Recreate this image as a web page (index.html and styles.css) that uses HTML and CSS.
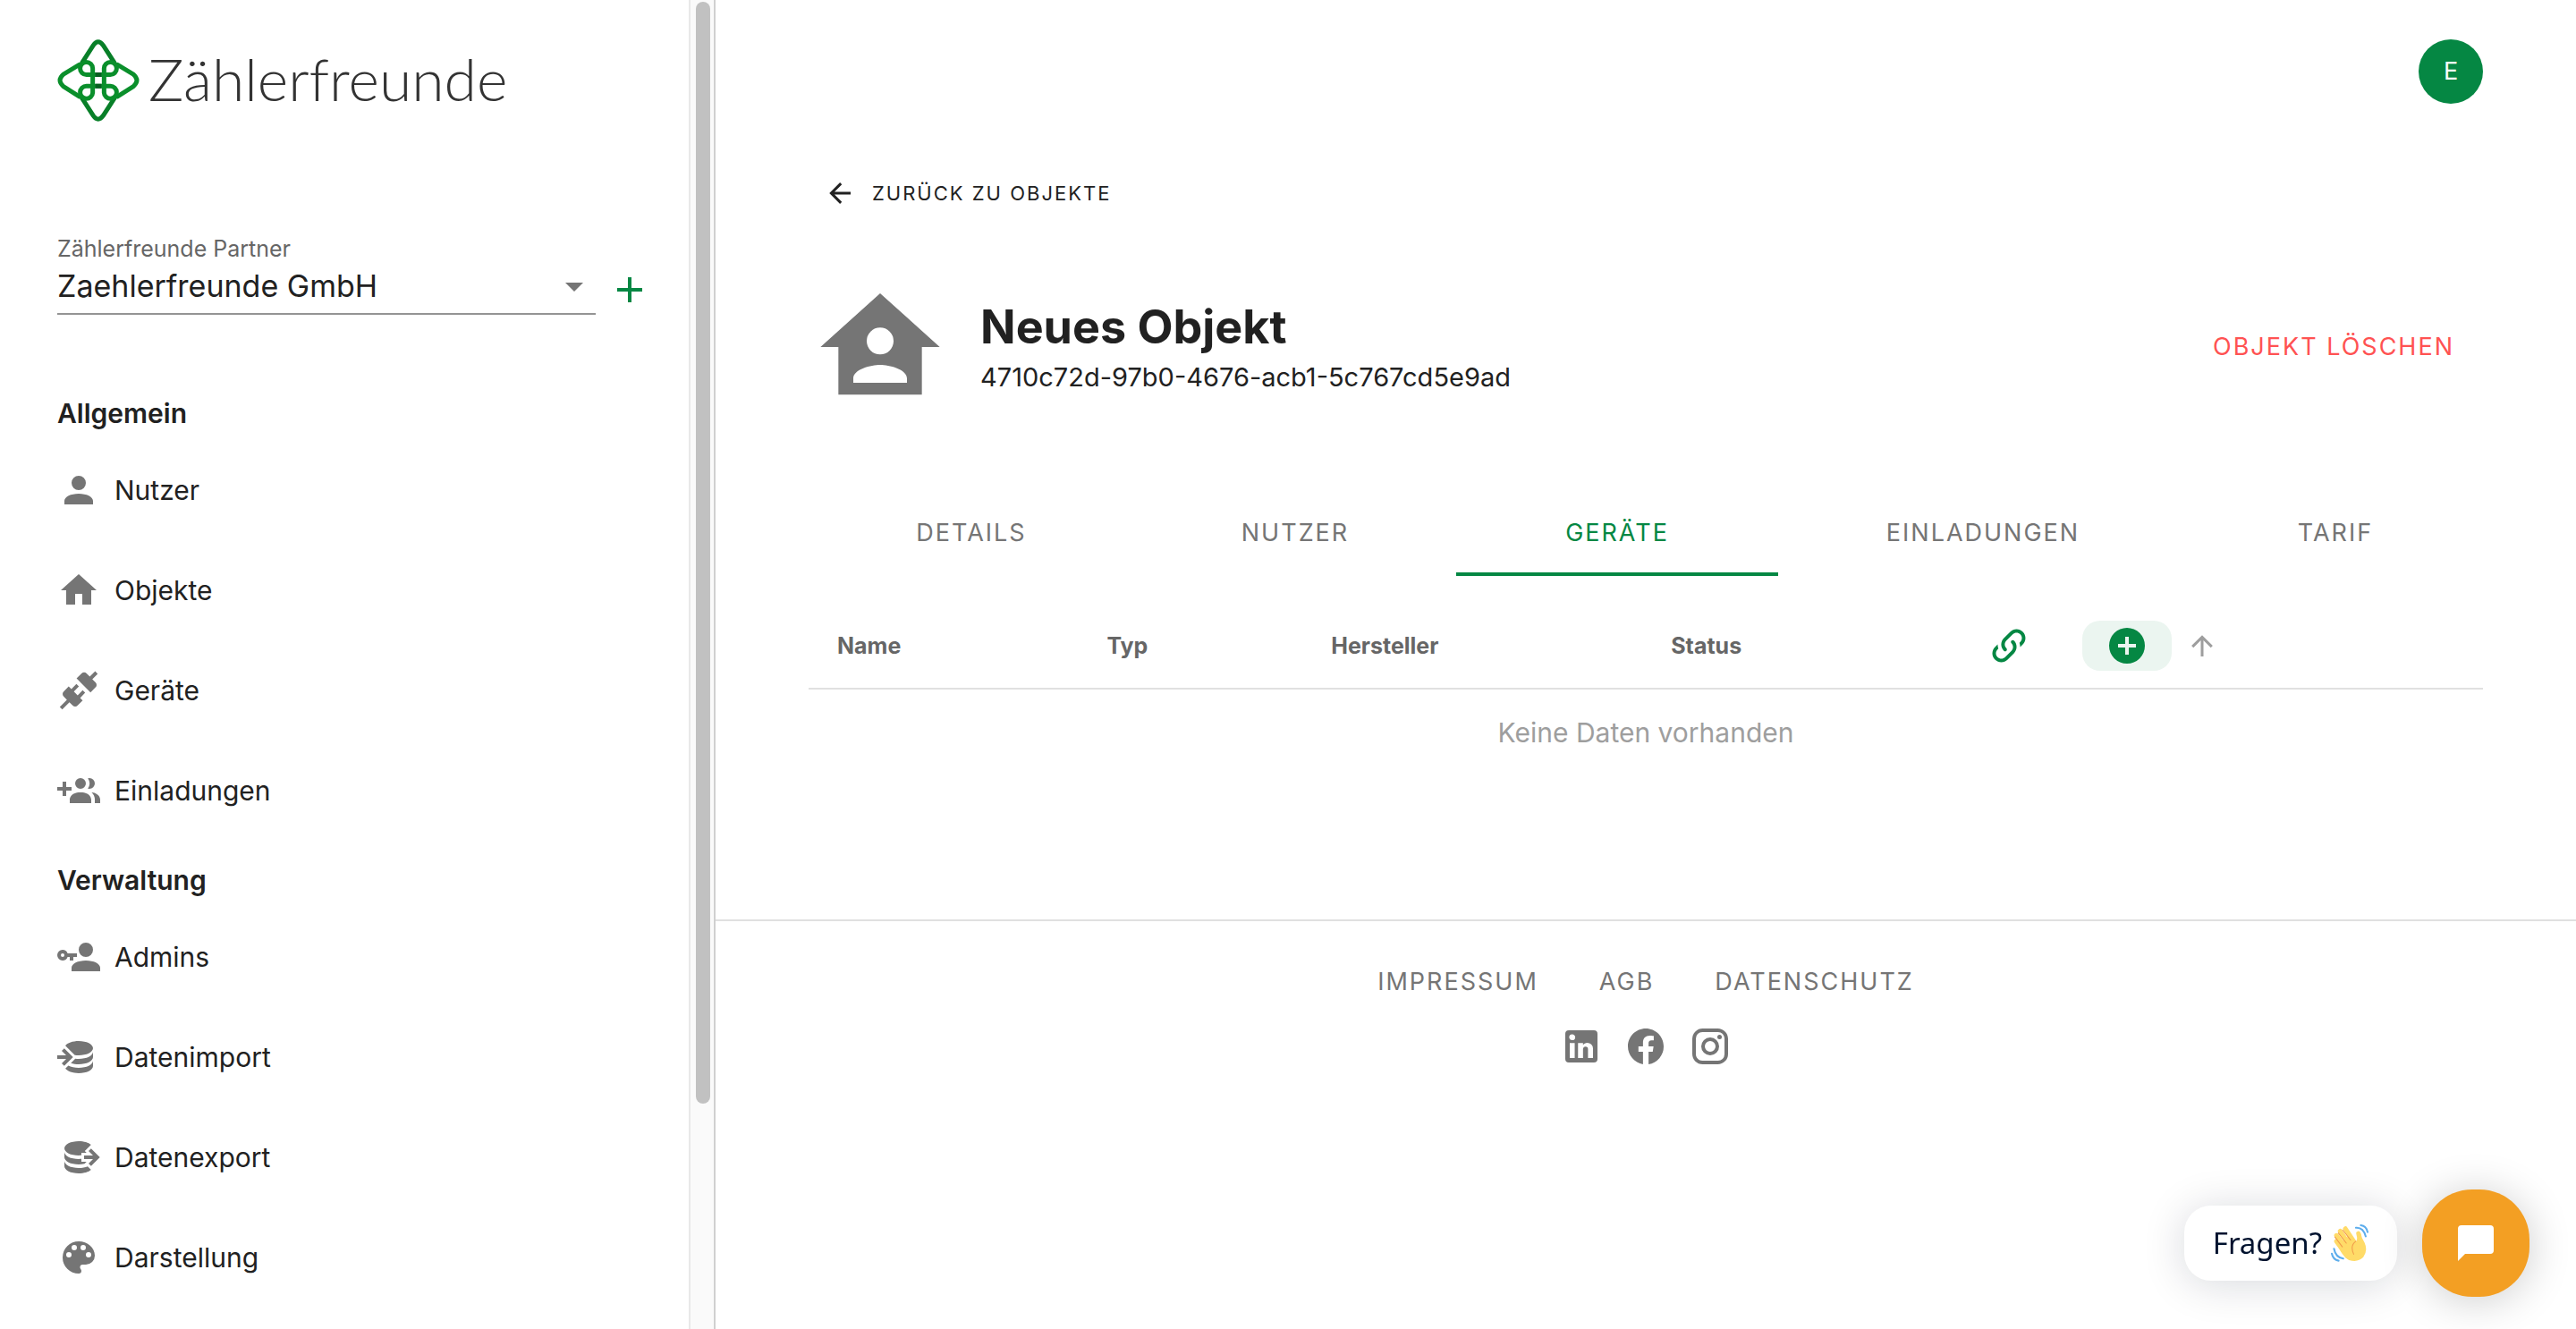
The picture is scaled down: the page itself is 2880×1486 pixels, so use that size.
FILE: index.html
```html
<!DOCTYPE html>
<html lang="de">
<head>
<meta charset="utf-8">
<meta name="viewport" content="width=device-width, initial-scale=1">
<title>Zählerfreunde – Neues Objekt</title>
<link rel="stylesheet" href="styles.css">
</head>
<body>
<div class="app">
  <aside class="drawer">
    <div class="drawer-content">
      <a class="logo" href="#">
        <svg class="logo-mark" viewBox="12 11 272 275" aria-hidden="true">
          <g fill="none" stroke="#0a8f2b" stroke-width="15" stroke-linecap="round" stroke-linejoin="round">
            <path stroke="#087f28" d="M94 88L131 31Q147 8 164 31L201 88M94 209L131 266Q147 289 164 266L201 209"/>
            <path d="M84 96L31 128Q8 148 31 168L84 202M212 96L265 128Q288 148 265 168L212 202"/>
            <path d="M129 108V189A21 21 0 1 1 108 167H188A21 21 0 1 1 167 189V108A21 21 0 1 1 188 129H108A21 21 0 1 1 129 108Z"/>
            <path stroke="#075f20" stroke-linecap="butt" d="M138 129H158M138 167H158"/>
          </g>
        </svg>
        <span class="logo-text">Zählerfreunde</span>
      </a>
      <div class="partner">
        <div class="partner-field">
          <label for="partner">Zählerfreunde Partner</label>
          <div class="select-box">
            <select id="partner"><option>Zaehlerfreunde GmbH</option></select>
            <svg class="icon caret" viewBox="0 0 24 24" aria-hidden="true"><path d="M7,10L12,15L17,10H7Z"/></svg>
          </div>
        </div>
        <button class="icon-button" type="button" aria-label="Partner hinzufügen">
          <svg class="icon" viewBox="0 0 24 24"><path d="M19,13H13V19H11V13H5V11H11V5H13V11H19V13Z"/></svg>
        </button>
      </div>
      <nav class="menu">
        <h2>Allgemein</h2>
        <a href="#"><svg class="icon" viewBox="0 0 24 24"><path d="M12,4A4,4 0 0,1 16,8A4,4 0 0,1 12,12A4,4 0 0,1 8,8A4,4 0 0,1 12,4M12,14C16.42,14 20,15.79 20,18V20H4V18C4,15.79 7.58,14 12,14Z"/></svg>Nutzer</a>
        <a href="#"><svg class="icon" viewBox="0 0 24 24"><path d="M10,20V14H14V20H19V12H22L12,3L2,12H5V20H10Z"/></svg>Objekte</a>
        <a href="#"><svg class="icon" viewBox="0 0 24 24"><path d="M21.4 7.5C22.2 8.3 22.2 9.6 21.4 10.3L18.6 13.1L10.8 5.3L13.6 2.5C14.4 1.7 15.7 1.7 16.4 2.5L18.2 4.3L21.2 1.3L22.6 2.7L19.6 5.7L21.4 7.5M15.6 13.3L14.2 11.9L11.4 14.7L9.3 12.6L12.1 9.8L10.7 8.4L7.9 11.2L6.4 9.8L3.6 12.6C2.8 13.4 2.8 14.7 3.6 15.4L5.4 17.2L1.4 21.2L2.8 22.6L6.8 18.6L8.6 20.4C9.4 21.2 10.7 21.2 11.4 20.4L14.2 17.6L12.8 16.2L15.6 13.3Z"/></svg>Geräte</a>
        <a href="#"><svg class="icon" viewBox="0 0 24 24"><path d="M19 17V19H7V17S7 13 13 13 19 17 19 17M16 8A3 3 0 1 0 13 11A3 3 0 0 0 16 8M19.2 13.06A5.6 5.6 0 0 1 21 17V19H24V17S24 13.55 19.2 13.06M18 5A2.91 2.91 0 0 0 17.11 5.14A5 5 0 0 1 17.11 10.86A2.91 2.91 0 0 0 18 11A3 3 0 0 0 18 5M8 10H5V7H3V10H0V12H3V15H5V12H8Z"/></svg>Einladungen</a>
        <h2>Verwaltung</h2>
        <a href="#"><svg class="icon" viewBox="0 0 24 24"><path d="M11,10V12H9V14H7V12H5.8C5.4,13.2 4.3,14 3,14A3,3 0 0,1 0,11A3,3 0 0,1 3,8C4.3,8 5.4,8.8 5.8,10H11M3,10A1,1 0 0,0 2,11A1,1 0 0,0 3,12A1,1 0 0,0 4,11A1,1 0 0,0 3,10M16,14C20.42,14 24,15.79 24,18V20H8V18C8,15.79 11.58,14 16,14M16,12A4,4 0 0,1 12,8A4,4 0 0,1 16,4A4,4 0 0,1 20,8A4,4 0 0,1 16,12Z"/></svg>Admins</a>
        <a href="#"><svg class="icon" viewBox="0 0 24 24"><path d="M12,3C8.59,3 5.69,4.07 4.54,5.57L9.79,10.82C10.5,10.93 11.22,11 12,11C16.42,11 20,9.21 20,7C20,4.79 16.42,3 12,3M3.92,7.08L2.5,8.5L5,11H0V13H5L2.5,15.5L3.92,16.92L8.84,12M20,9C20,11.21 16.42,13 12,13C11.34,13 10.7,12.95 10.09,12.87L7.62,15.34C8.88,15.75 10.38,16 12,16C16.42,16 20,14.21 20,12M20,14C20,16.21 16.42,18 12,18C9.72,18 7.67,17.5 6.21,16.75L4.53,18.43C5.68,19.93 8.59,21 12,21C16.42,21 20,19.21 20,17"/></svg>Datenimport</a>
        <a href="#"><svg class="icon" viewBox="0 0 24 24"><path d="M12,3C7.58,3 4,4.79 4,7C4,9.21 7.58,11 12,11C12.5,11 13,10.97 13.5,10.92V9.5H16.39L15.39,8.5L18.9,5C17.5,3.8 14.94,3 12,3M18.92,7.08L17.5,8.5L20,11H15V13H20L17.5,15.5L18.92,16.92L23.84,12M4,9V12C4,14.21 7.58,16 12,16C13.17,16 14.26,15.85 15.25,15.63L16.38,14.5H13.5V12.92C13,12.97 12.5,13 12,13C7.58,13 4,11.21 4,9M4,14V17C4,19.21 7.58,21 12,21C14.94,21 17.5,20.2 18.9,19L17,17.1C15.61,17.66 13.9,18 12,18C7.58,18 4,16.21 4,14Z"/></svg>Datenexport</a>
        <a href="#"><svg class="icon" viewBox="0 0 24 24"><path d="M17.5,12A1.5,1.5 0 0,1 16,10.5A1.5,1.5 0 0,1 17.5,9A1.5,1.5 0 0,1 19,10.5A1.5,1.5 0 0,1 17.5,12M14.5,8A1.5,1.5 0 0,1 13,6.5A1.5,1.5 0 0,1 14.5,5A1.5,1.5 0 0,1 16,6.5A1.5,1.5 0 0,1 14.5,8M9.5,8A1.5,1.5 0 0,1 8,6.5A1.5,1.5 0 0,1 9.5,5A1.5,1.5 0 0,1 11,6.5A1.5,1.5 0 0,1 9.5,8M6.5,12A1.5,1.5 0 0,1 5,10.5A1.5,1.5 0 0,1 6.5,9A1.5,1.5 0 0,1 8,10.5A1.5,1.5 0 0,1 6.5,12M12,3A9,9 0 0,0 3,12A9,9 0 0,0 12,21A1.5,1.5 0 0,0 13.5,19.5C13.5,19.11 13.35,18.76 13.11,18.5C12.88,18.23 12.73,17.88 12.73,17.5A1.5,1.5 0 0,1 14.23,16H16A5,5 0 0,0 21,11C21,6.58 16.97,3 12,3Z"/></svg>Darstellung</a>
      </nav>
    </div>
    <div class="scrollbar" aria-hidden="true"><div class="scrollbar-thumb"></div></div>
  </aside>

  <div class="page">
    <main class="content">
      <header class="topbar">
        <button class="avatar" type="button" aria-label="Benutzerkonto">E</button>
      </header>
      <a class="back" href="#">
        <svg class="icon small" viewBox="0 0 24 24"><path d="M20,11V13H8L13.5,18.5L12.08,19.92L4.16,12L12.08,4.08L13.5,5.5L8,11H20Z"/></svg>Zurück zu Objekte
      </a>
      <section class="object-head">
        <svg class="object-icon" viewBox="0 0 24 24" aria-hidden="true"><path d="M12,3L2,12H5V20H19V12H22L12,3M12,8.75A2.25,2.25 0 0,1 14.25,11A2.25,2.25 0 0,1 12,13.25A2.25,2.25 0 0,1 9.75,11A2.25,2.25 0 0,1 12,8.75M12,15C13.5,15 16.5,15.75 16.5,17.25V18H7.5V17.25C7.5,15.75 10.5,15 12,15Z"/></svg>
        <div class="object-title">
          <h1>Neues Objekt</h1>
          <p>4710c72d-97b0-4676-acb1-5c767cd5e9ad</p>
        </div>
        <button class="delete" type="button">Objekt löschen</button>
      </section>
      <div class="tabs" role="tablist">
        <button type="button" role="tab">Details</button>
        <button type="button" role="tab">Nutzer</button>
        <button type="button" role="tab" class="active" aria-selected="true">Geräte</button>
        <button type="button" role="tab">Einladungen</button>
        <button type="button" role="tab">Tarif</button>
      </div>
      <table class="devices">
        <thead>
          <tr>
            <th class="col-name">Name</th>
            <th class="col-type">Typ</th>
            <th class="col-maker">Hersteller</th>
            <th class="col-status">Status</th>
            <th>
              <div class="actions">
                <button class="action" type="button" aria-label="Gerät verknüpfen"><svg class="icon" viewBox="0 0 24 24"><path d="M10.59,13.41C11,13.8 11,14.44 10.59,14.83C10.2,15.22 9.56,15.22 9.17,14.83C7.22,12.88 7.22,9.71 9.17,7.76V7.76L12.71,4.22C14.66,2.27 17.83,2.27 19.78,4.22C21.73,6.17 21.73,9.34 19.78,11.29L18.29,12.78C18.3,11.96 18.17,11.14 17.89,10.36L18.36,9.88C19.54,8.71 19.54,6.81 18.36,5.64C17.19,4.46 15.29,4.46 14.12,5.64L10.59,9.17C9.41,10.34 9.41,12.24 10.59,13.41M13.41,9.17C13.8,8.78 14.44,8.78 14.83,9.17C16.78,11.12 16.78,14.29 14.83,16.24V16.24L11.29,19.78C9.34,21.73 6.17,21.73 4.22,19.78C2.27,17.83 2.27,14.66 4.22,12.71L5.71,11.22C5.7,12.04 5.83,12.86 6.11,13.65L5.64,14.12C4.46,15.29 4.46,17.19 5.64,18.36C6.81,19.54 8.71,19.54 9.88,18.36L13.41,14.83C14.59,13.66 14.59,11.76 13.41,10.59C13,10.2 13,9.56 13.41,9.17Z"/></svg></button>
                <button class="action highlighted" type="button" aria-label="Gerät hinzufügen"><svg class="icon" viewBox="0 0 24 24"><path d="M17,13H13V17H11V13H7V11H11V7H13V11H17M12,2A10,10 0 0,0 2,12A10,10 0 0,0 12,22A10,10 0 0,0 22,12A10,10 0 0,0 12,2Z"/></svg></button>
                <svg class="icon small sort" viewBox="0 0 24 24" aria-hidden="true"><path d="M13,20H11V8L5.5,13.5L4.08,12.08L12,4.16L19.92,12.08L18.5,13.5L13,8V20Z"/></svg>
              </div>
            </th>
          </tr>
        </thead>
        <tbody>
          <tr><td colspan="5">Keine Daten vorhanden</td></tr>
        </tbody>
      </table>
    </main>
    <footer class="footer">
      <nav class="footer-links">
        <a href="#">Impressum</a>
        <a href="#">AGB</a>
        <a href="#">Datenschutz</a>
      </nav>
      <div class="social">
        <a href="#" aria-label="LinkedIn"><svg class="icon" viewBox="0 0 24 24"><path d="M19 3A2 2 0 0 1 21 5V19A2 2 0 0 1 19 21H5A2 2 0 0 1 3 19V5A2 2 0 0 1 5 3H19M18.5 18.5V13.2A3.26 3.26 0 0 0 15.24 9.94C14.39 9.94 13.4 10.46 12.92 11.24V10.13H10.13V18.5H12.92V13.57C12.92 12.8 13.54 12.17 14.31 12.17A1.4 1.4 0 0 1 15.71 13.57V18.5H18.5M6.88 8.56A1.68 1.68 0 0 0 8.56 6.88C8.56 5.95 7.81 5.19 6.88 5.19A1.69 1.69 0 0 0 5.19 6.88C5.19 7.81 5.95 8.56 6.88 8.56M8.27 18.5V10.13H5.5V18.5H8.27Z"/></svg></a>
        <a href="#" aria-label="Facebook"><svg class="icon" viewBox="0 0 24 24"><path d="M12 2.04C6.5 2.04 2 6.53 2 12.06C2 17.06 5.66 21.21 10.44 21.96V14.96H7.9V12.06H10.44V9.85C10.44 7.34 11.93 5.96 14.22 5.96C15.31 5.96 16.45 6.15 16.45 6.15V8.62H15.19C13.95 8.62 13.56 9.39 13.56 10.18V12.06H16.34L15.89 14.96H13.56V21.96A10 10 0 0 0 22 12.06C22 6.53 17.5 2.04 12 2.04Z"/></svg></a>
        <a href="#" aria-label="Instagram"><svg class="icon" viewBox="0 0 24 24"><path d="M7.8,2H16.2C19.4,2 22,4.6 22,7.8V16.2A5.8,5.8 0 0,1 16.2,22H7.8C4.6,22 2,19.4 2,16.2V7.8A5.8,5.8 0 0,1 7.8,2M7.6,4A3.6,3.6 0 0,0 4,7.6V16.4C4,18.39 5.61,20 7.6,20H16.4A3.6,3.6 0 0,0 20,16.4V7.6C20,5.61 18.39,4 16.4,4H7.6M17.25,5.5A1.25,1.25 0 0,1 18.5,6.75A1.25,1.25 0 0,1 17.25,8A1.25,1.25 0 0,1 16,6.75A1.25,1.25 0 0,1 17.25,5.5M12,7A5,5 0 0,1 17,12A5,5 0 0,1 12,17A5,5 0 0,1 7,12A5,5 0 0,1 12,7M12,9A3,3 0 0,0 9,12A3,3 0 0,0 12,15A3,3 0 0,0 15,12A3,3 0 0,0 12,9Z"/></svg></a>
      </div>
    </footer>
  </div>
</div>

<div class="chat">
  <button class="chat-label" type="button">Fragen?
    <svg class="wave" viewBox="29 27 122 122" aria-hidden="true">
      <g fill="none" stroke="#ffdb68" stroke-width="15" stroke-linecap="round">
        <path d="M47 82L82 130M47 63L90 120M59 49L100 110M76 41L112 96"/>
        <path stroke-width="14" d="M118 56L126 92"/>
      </g>
      <path fill="#ffdb68" d="M48 92L92 62L110 86Q116 72 118 54L126 56Q128 72 138 86Q150 112 134 134Q116 152 88 143Q74 136 64 120Z"/>
      <g fill="none" stroke="#f09a4a" stroke-width="3" stroke-linecap="round">
        <path d="M42 68L66 100M53 55L79 88M67 45L93 78M110 82Q90 96 103 124"/>
      </g>
      <g fill="none" stroke="#5dadec" stroke-width="6" stroke-linecap="round">
        <path d="M110 38Q134 36 142 66M126 30Q144 32 148 52M39 106Q44 134 69 138M32 122Q36 142 54 145"/>
      </g>
    </svg>
  </button>
  <button class="chat-open" type="button" aria-label="Chat öffnen">
    <svg class="icon" viewBox="0 0 24 24"><path d="M20,2H4A2,2 0 0,0 2,4V22L6,18H20A2,2 0 0,0 22,16V4A2,2 0 0,0 20,2Z"/></svg>
  </button>
</div>
</body>
</html>
```

FILE: styles.css
```css
* { box-sizing: border-box; }

body {
  margin: 0;
  background: #fff;
  color: #212121;
  font-family: Inter, "Liberation Sans", sans-serif;
  font-size: 30px;
  line-height: 40px;
}

h1, h2, p { margin: 0; }
a { color: inherit; text-decoration: none; }
button {
  margin: 0;
  padding: 0;
  border: 0;
  background: none;
  color: inherit;
  font: inherit;
  cursor: pointer;
}

.icon { display: block; flex: none; width: 48px; height: 48px; fill: currentColor; }
.icon.small { width: 36px; height: 36px; }

.app { display: flex; height: 100vh; }

/* Drawer */
.drawer {
  display: flex;
  flex: 0 0 800px;
  overflow: hidden;
  border-right: 2px solid #d0d0d0;
}
.drawer-content { flex: 1; padding: 44px 42px 0 64px; overflow: hidden; }
.scrollbar {
  width: 28px;
  padding: 2px 4px 0 6px;
  border-left: 2px solid #e8e8e8;
  background: #fafafa;
}
.scrollbar-thumb { height: 83%; border-radius: 8px; background: #c1c1c1; }

.logo { display: flex; align-items: center; gap: 10px; height: 92px; }
.logo-mark { width: 92px; height: 92px; }
.logo-text {
  color: #333;
  font-family: Lato, sans-serif;
  font-size: 66px;
  font-weight: 300;
  line-height: 88px;
  padding-bottom: 4px;
}

.partner { display: flex; align-items: flex-end; gap: 14px; padding-top: 124px; }
.partner-field { flex: 1; border-bottom: 2px solid #949494; }
.partner-field label { display: block; color: #666; font-size: 25px; line-height: 36px; }
.select-box { display: grid; align-items: center; height: 54px; padding-bottom: 8px; }
.select-box > * { grid-area: 1 / 1; }
.select-box select {
  width: 100%;
  height: 48px;
  padding: 0;
  border: 0;
  background: none;
  color: inherit;
  font: inherit;
  font-size: 34px;
  appearance: none;
}
.caret { justify-self: end; color: #757575; pointer-events: none; }
.icon-button { display: grid; place-items: center; height: 56px; color: #058743; }

.menu { padding-top: 66px; }
.menu h2 { padding: 16px 0 2px; font-size: 30px; font-weight: 600; line-height: 56px; }
.menu a { display: flex; align-items: center; gap: 16px; height: 112px; }
.menu .icon { color: #757575; }

/* Page */
.page { flex: 1; min-width: 0; overflow: hidden; }
.content { padding: 44px 5% 162px; }
.topbar { display: flex; justify-content: flex-end; }
.avatar {
  width: 72px;
  height: 72px;
  border-radius: 50%;
  background: #058743;
  color: #fff;
  font-size: 27px;
}
.back {
  display: inline-flex;
  align-items: center;
  gap: 18px;
  height: 56px;
  margin-top: 72px;
  padding-left: 17px;
  font-size: 22px;
  letter-spacing: 2px;
  text-transform: uppercase;
}
.object-head { display: flex; align-items: center; padding-top: 64px; }
.object-icon { width: 160px; height: 160px; fill: #757575; }
.object-title { flex: 1; padding-left: 32px; }
.object-title h1 { font-size: 52px; font-weight: 700; line-height: 68px; }
.object-title p { font-size: 29px; line-height: 44px; }
.delete {
  padding: 0 32px;
  color: #ff5252;
  font-size: 27px;
  letter-spacing: 2px;
  text-transform: uppercase;
}

.tabs {
  display: grid;
  grid-template-columns: 364fr 360fr 360fr 458fr 330fr;
  padding-top: 80px;
}
.tabs button {
  height: 96px;
  padding-top: 4px;
  border-bottom: 4px solid transparent;
  color: #757575;
  font-size: 27px;
  letter-spacing: 2px;
  text-transform: uppercase;
}
.tabs .active { border-color: #058743; color: #058743; }

.devices {
  width: 100%;
  margin-top: 30px;
  border-collapse: collapse;
  table-layout: fixed;
}
.devices th {
  height: 96px;
  padding: 0 32px;
  border-bottom: 2px solid #e0e0e0;
  color: #666;
  font-size: 25px;
  font-weight: 700;
  text-align: left;
}
.devices td { height: 96px; padding: 0 32px; color: #9e9e9e; text-align: center; }
.col-name { width: 16.1%; }
.col-type { width: 13.4%; }
.col-maker { width: 20.3%; }
.col-status { width: 17.5%; }
.actions { display: flex; align-items: center; }
.action {
  display: grid;
  place-items: center;
  width: 100px;
  height: 56px;
  margin-right: 32px;
  border-radius: 20px;
  color: #058743;
}
.action.highlighted { margin-right: 16px; background: #ebf5f0; }
.sort { color: #9e9e9e; }

.footer { padding-top: 48px; border-top: 2px solid #e0e0e0; color: #757575; }
.footer-links {
  display: flex;
  justify-content: center;
  gap: 68px;
  font-size: 27px;
  letter-spacing: 2px;
  text-transform: uppercase;
}
.social { display: flex; justify-content: center; gap: 24px; padding-top: 28px; }

/* Chat launcher floating over the page */
.chat {
  position: fixed;
  right: 52px;
  bottom: 36px;
  display: flex;
  align-items: center;
  gap: 28px;
}
.chat-label {
  display: flex;
  align-items: center;
  gap: 10px;
  height: 84px;
  padding: 0 32px;
  border-radius: 30px;
  background: #fff;
  box-shadow: 0 4px 48px rgba(0, 18, 46, .16);
  color: #00122e;
  font-family: "Noto Sans", sans-serif;
  font-size: 33px;
}
.wave { width: 42px; height: 42px; }
.chat-open {
  display: grid;
  place-items: center;
  width: 120px;
  height: 120px;
  border-radius: 56px;
  background: #f39f23;
  box-shadow: 0 4px 48px rgba(0, 0, 0, .2);
  color: #fff;
}
```
